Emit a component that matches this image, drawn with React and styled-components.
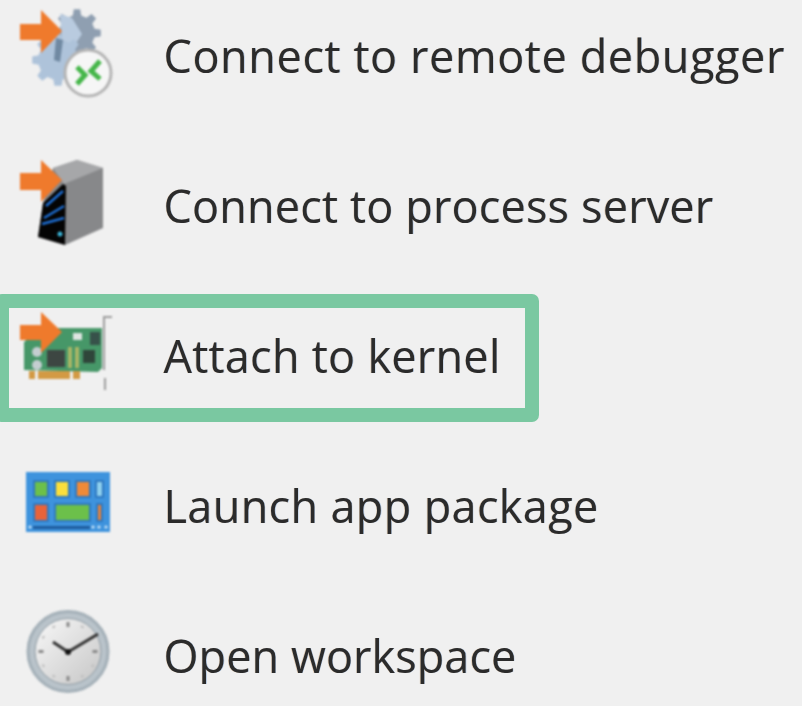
import React from 'react';
import styled, { createGlobalStyle } from 'styled-components';

const GlobalStyle = createGlobalStyle`
    html, body {
        margin: 0;
        background-color: #f0f0f0;
    }
`;

const Page = styled.div`
    width: 802px;
    height: 706px;
    overflow: hidden;
    background-color: #f0f0f0;
`;

const MenuList = styled.ul`
    list-style: none;
    margin: -20px 0 0;
    padding: 0;
`;

const MenuRow = styled.li`
    position: relative;
    display: flex;
    align-items: center;
    height: 150px;
`;

const IconSlot = styled.div`
    width: 163.5px;
    flex: none;
    display: flex;
    svg {
        display: block;
        flex: none;
        filter: blur(1.1px);
    }
`;

const Label = styled.span`
    font-family: 'Open Sans', 'Noto Sans', sans-serif;
    font-size: 45px;
    letter-spacing: ${(props) => props.$tracking}px;
    color: #2b2b2b;
    white-space: nowrap;
    text-shadow: -0.6px 0 rgba(190, 120, 40, 0.3), 0.6px 0 rgba(40, 110, 200, 0.3);
    filter: blur(0.45px);
`;

const Highlight = styled.div`
    position: absolute;
    left: -5px;
    top: 14px;
    width: 544px;
    height: 128px;
    box-sizing: border-box;
    border: 14px solid #7ac8a1;
    border-radius: 7px;
`;

const Tile = styled.rect`
    stroke: #2f78c0;
    stroke-width: 2px;
`;

// outline of a cog, teeth worked out from the centre
const gearPath = (cx, cy, outer, inner, teeth) => {
    const step = (Math.PI * 2) / teeth;
    const points = [];
    for (let i = 0; i < teeth; i++) {
        const a = i * step;
        [[-0.3, inner], [-0.17, outer], [0.17, outer], [0.3, inner]].forEach(([t, r]) => {
            const angle = a + t * step;
            points.push(`${(cx + r * Math.cos(angle)).toFixed(1)} ${(cy + r * Math.sin(angle)).toFixed(1)}`);
        });
    }
    return `M${points.join(' L')} Z`;
};

const Arrow = () => (
    <polygon points="20,24 41,24 41,10 62,31 41,53 41,40 20,40" fill="#ef7a2c" />
);

const GearIcon = () => (
    <svg width="130" height="110" viewBox="0 0 130 110">
        <path d={gearPath(77, 33, 24, 18, 8)} fill="#8f9fb1" />
        <polygon points="60,14 72,18 82,34 74,46 62,40" fill="#b9cbdf" />
        <path d={gearPath(58, 60, 26, 20, 8)} fill="#aec3da" />
        <polygon points="56,38 63,40 60,62 54,60" fill="#7089a2" />
        <circle cx="88" cy="73" r="23" fill="#f6f6f6" stroke="#b4b4b4" strokeWidth="3" />
        <path d="M77 67 L85 75 L77 84 M100 61 L91 71 L100 79" fill="none" stroke="#45b649" strokeWidth="5" />
        <Arrow />
    </svg>
);

const ServerIcon = () => (
    <svg width="130" height="110" viewBox="0 0 130 110">
        <polygon points="53,18 77,10 103,18 103,78 65,95 38,87 43,53" fill="#87888a" />
        <polygon points="53,18 77,10 103,18 64,34" fill="#a6a7a9" />
        <polygon points="63,34 66,36 65,95 38,87 43,53" fill="#040404" />
        <path d="M46 56 L63 41 M44 68 L64 56 M42 74 L64 68" fill="none" stroke="#1d6fd6" strokeWidth="2.5" />
        <circle cx="60" cy="84" r="2.5" fill="#3bb3d6" />
        <polygon points="20,23 41,23 41,10 62,30 41,52 41,40 20,40" fill="#ef7a2c" />
    </svg>
);

const CardIcon = () => (
    <svg width="130" height="110" viewBox="0 0 130 110">
        <polygon points="24,42 40,28 102,28 102,68 98,72 24,70" fill="#469768" />
        <rect x="47" y="50" width="18" height="17" fill="#3d4642" />
        <rect x="83" y="50" width="12" height="13" fill="#2f463a" />
        <rect x="90" y="32" width="10" height="13" fill="#37524a" />
        <rect x="73" y="33" width="9" height="7" fill="#dfe5e1" />
        <rect x="68" y="47" width="4" height="21" fill="#a9b666" />
        <rect x="75" y="47" width="4" height="21" fill="#a9b666" />
        <circle cx="37" cy="52" r="5" fill="#c4ced0" />
        <circle cx="37" cy="65" r="5" fill="#c4ced0" />
        <rect x="29" y="71" width="6" height="8" fill="#d39a44" />
        <rect x="38" y="71" width="32" height="8" fill="#d39a44" />
        <rect x="73" y="71" width="7" height="8" fill="#d39a44" />
        <path d="M112 17 L104 17 L104 70 M105 78 L105 90" fill="none" stroke="#9c9c9c" strokeWidth="2" />
        <polygon points="20,25 41,25 41,12 62,32 41,53 41,40 20,40" fill="#ef7a2c" />
    </svg>
);

const TilesIcon = () => (
    <svg width="130" height="110" viewBox="0 0 130 110">
        <rect x="26" y="22" width="84" height="60" fill="#3e93dd" />
        <Tile x="34" y="31" width="14" height="16" fill="#6cc04a" />
        <Tile x="55" y="31" width="14" height="16" fill="#fbdf3c" />
        <Tile x="76" y="31" width="14" height="16" fill="#f08a38" />
        <Tile x="96" y="31" width="7" height="16" fill="#8fd0ee" />
        <Tile x="34" y="54" width="14" height="17" fill="#e8633a" />
        <Tile x="55" y="54" width="35" height="17" fill="#6cc04a" />
        <Tile x="97" y="54" width="5" height="17" fill="#e8833a" />
        <rect x="33" y="76" width="57" height="3" fill="#1e5c9e" />
        <circle cx="30" cy="77" r="1.6" fill="#cfe6f7" />
        <circle cx="93" cy="77" r="1.6" fill="#cfe6f7" />
        <circle cx="99" cy="77" r="1.6" fill="#cfe6f7" />
        <circle cx="106" cy="77" r="1.6" fill="#cfe6f7" />
    </svg>
);

const ClockIcon = () => (
    <svg width="130" height="110" viewBox="0 0 130 110">
        <defs>
            <linearGradient id="clockFace" x1="0" y1="0" x2="1" y2="1">
                <stop offset="0" stopColor="#f8f8f8" />
                <stop offset="1" stopColor="#c6c6c6" />
            </linearGradient>
        </defs>
        <circle cx="68" cy="51.5" r="40" fill="#b9c3ca" stroke="#a4b0b8" strokeWidth="3" />
        <circle cx="68" cy="51.5" r="33" fill="url(#clockFace)" stroke="#8f9ba3" strokeWidth="1" />
        {Array.from({ length: 12 }, (_, i) => (
            <line
                key={i}
                x1="68"
                y1="22"
                x2="68"
                y2={i % 3 === 0 ? 27 : 24}
                stroke={i % 3 === 0 ? '#8a8a8a' : '#bdbdbd'}
                strokeWidth="3"
                transform={`rotate(${i * 30} 68 51.5)`}
            />
        ))}
        <path d="M53 42 L68 52 L98 34" fill="none" stroke="#333" strokeWidth="3" />
        <circle cx="68" cy="52" r="3" fill="#111" />
    </svg>
);

const items = [
    { id: 'remote', label: 'Connect to remote debugger', tracking: 0.6, Icon: GearIcon },
    { id: 'server', label: 'Connect to process server', tracking: 0.17, Icon: ServerIcon },
    { id: 'kernel', label: 'Attach to kernel', tracking: 0.27, Icon: CardIcon, highlighted: true },
    { id: 'package', label: 'Launch app package', tracking: 0.35, Icon: TilesIcon },
    { id: 'workspace', label: 'Open workspace', tracking: 0.07, Icon: ClockIcon },
];

const App = () => (
    <Page>
        <GlobalStyle />
        <MenuList>
            {items.map(({ id, label, tracking, Icon, highlighted }) => (
                <MenuRow key={id}>
                    <IconSlot><Icon /></IconSlot>
                    <Label $tracking={tracking}>{label}</Label>
                    {highlighted && <Highlight />}
                </MenuRow>
            ))}
        </MenuList>
    </Page>
);

export default App;
